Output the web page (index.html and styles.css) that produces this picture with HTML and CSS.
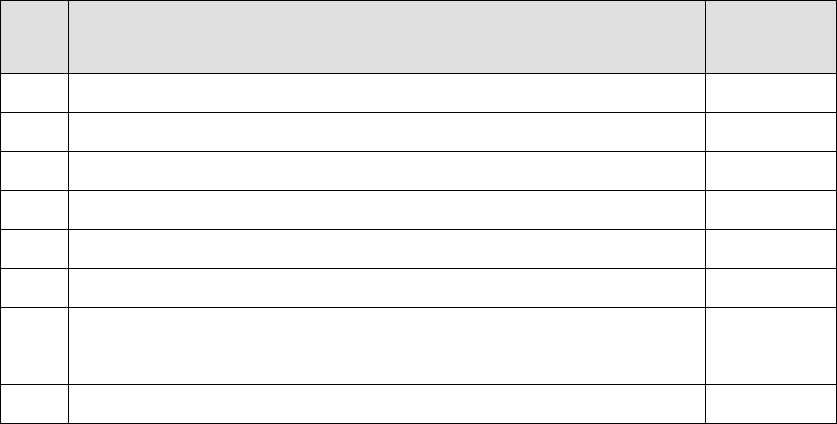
FILE: index.html
```html
<!DOCTYPE html>
<html>
<head>
<meta charset="utf-8">
<link rel="stylesheet" href="styles.css">
</head>
<body>
<table class="grid">
  <colgroup>
    <col class="c-num">
    <col class="c-main">
    <col class="c-side">
  </colgroup>
  <thead>
    <tr class="row-head"><th></th><th></th><th></th></tr>
  </thead>
  <tbody>
    <tr class="row"><td></td><td></td><td></td></tr>
    <tr class="row"><td></td><td></td><td></td></tr>
    <tr class="row"><td></td><td></td><td></td></tr>
    <tr class="row"><td></td><td></td><td></td></tr>
    <tr class="row"><td></td><td></td><td></td></tr>
    <tr class="row"><td></td><td></td><td></td></tr>
    <tr class="row-tall"><td></td><td></td><td></td></tr>
    <tr class="row"><td></td><td></td><td></td></tr>
  </tbody>
</table>
</body>
</html>
```

FILE: styles.css
```css
html, body {
  margin: 0;
  padding: 0;
  background: #ffffff;
  font-family: "Liberation Sans", Arial, sans-serif;
}

.grid {
  width: 837px;
  table-layout: fixed;
  border-collapse: separate;
  border-spacing: 0;
  border-top: 1px solid #000;
  border-left: 1px solid #000;
}

.c-num { width: 68px; }
.c-main { width: 637px; }
.c-side { width: 131px; }

.grid th,
.grid td {
  padding: 0;
  border-right: 1px solid #000;
  border-bottom: 1px solid #000;
  box-sizing: border-box;
}

.grid th {
  background: #dfdfdf;
  height: 73px;
}

.row td { height: 39px; }
.row-tall td { height: 77px; }
```
